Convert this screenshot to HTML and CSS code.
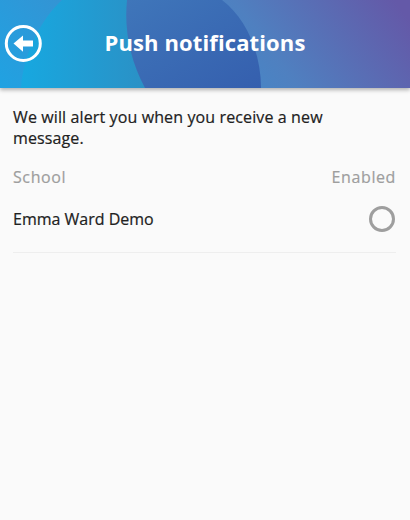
FILE: index.html
```html
<!DOCTYPE html>
<html lang="en">
<head>
<meta charset="utf-8">
<title>Push notifications</title>
<link rel="stylesheet" href="styles.css">
</head>
<body>
<header class="header">
  <svg class="blobs" viewBox="0 0 410 88" preserveAspectRatio="none" aria-hidden="true">
    <defs>
      <linearGradient id="bg" gradientUnits="userSpaceOnUse" x1="0" y1="88" x2="300" y2="-130">
        <stop offset="0" stop-color="#20a2e2"/>
        <stop offset="0.65" stop-color="#4f80c0"/>
        <stop offset="1" stop-color="#6459a8"/>
      </linearGradient>
      <linearGradient id="b1" x1="0" y1="0" x2="1" y2="0">
        <stop offset="0" stop-color="#17a8e0"/>
        <stop offset="1" stop-color="#2f8cc0"/>
      </linearGradient>
      <linearGradient id="b2" x1="0" y1="0" x2="1" y2="1">
        <stop offset="0" stop-color="#3f76ba"/>
        <stop offset="1" stop-color="#355fae"/>
      </linearGradient>
    </defs>
    <rect width="410" height="88" fill="url(#bg)"/>
    <path d="M21 88C23 55 40 20 62 0H170L146 88Z" fill="url(#b1)"/>
    <path d="M127 0H222C248 20 261 55 261 88H145C130 60 124 30 127 0Z" fill="url(#b2)"/>
  </svg>
  <button class="back" aria-label="Back">
    <svg width="38" height="38" viewBox="0 0 38 38" aria-hidden="true">
      <circle cx="19.3" cy="18.5" r="17" fill="none" stroke="#fff" stroke-width="3"/>
      <path d="M9.5 18.5L19 10.5V15.5H29V21.5H19V26.8Z" fill="#fff"/>
    </svg>
  </button>
  <h1 class="title">Push notifications</h1>
</header>
<main class="content">
  <p class="intro">We will alert you when you receive a new message.</p>
  <div class="labels"><span>School</span><span>Enabled</span></div>
  <div class="row">
    <span class="name">Emma Ward Demo</span>
    <span class="radio"></span>
  </div>
</main>
</body>
</html>
```
FILE: styles.css
```css
* { box-sizing: border-box; }
html, body { height: 100%; }
body {
  margin: 0;
  background: #fafafa;
  font-family: "Open Sans", sans-serif;
  color: #212121;
  overflow: hidden;
}
.header {
  position: relative;
  height: 88px;
  display: flex;
  align-items: center;
  justify-content: center;
  box-shadow: 0 2px 4px rgba(0,0,0,.3);
}
.blobs { position: absolute; inset: 0; width: 100%; height: 100%; }
.back {
  position: absolute;
  left: 4px;
  top: 25px;
  width: 38px;
  height: 38px;
  padding: 0;
  border: 0;
  background: none;
  display: flex;
}
.title {
  position: relative;
  top: -2px;
  margin: 0;
  color: #fff;
  font-size: 22px;
  font-weight: 700;
  line-height: 28px;
  letter-spacing: .12px;
}
.content { padding: 19px 14px 0 13px; }
.intro {
  margin: 0;
  font-size: 16px;
  line-height: 21px;
  font-weight: 500;
  letter-spacing: .12px;
  width: 340px;
  -webkit-text-stroke: .2px #212121;
}
.labels {
  display: flex;
  justify-content: space-between;
  margin-top: 17px;
  color: #9e9e9e;
  font-size: 16px;
  font-weight: 500;
  line-height: 22px;
  letter-spacing: .6px;
  -webkit-text-stroke: .2px #9e9e9e;
}
.row {
  display: flex;
  align-items: center;
  justify-content: space-between;
  height: 65px;
  border-bottom: 1px solid #eeeeee;
  font-size: 16px;
  font-weight: 500;
  padding-bottom: 3px;
  -webkit-text-stroke: .2px #212121;
}
.radio {
  width: 26px;
  height: 26px;
  border: 3px solid #9e9e9e;
  border-radius: 50%;
  margin-right: 1px;
}
```
